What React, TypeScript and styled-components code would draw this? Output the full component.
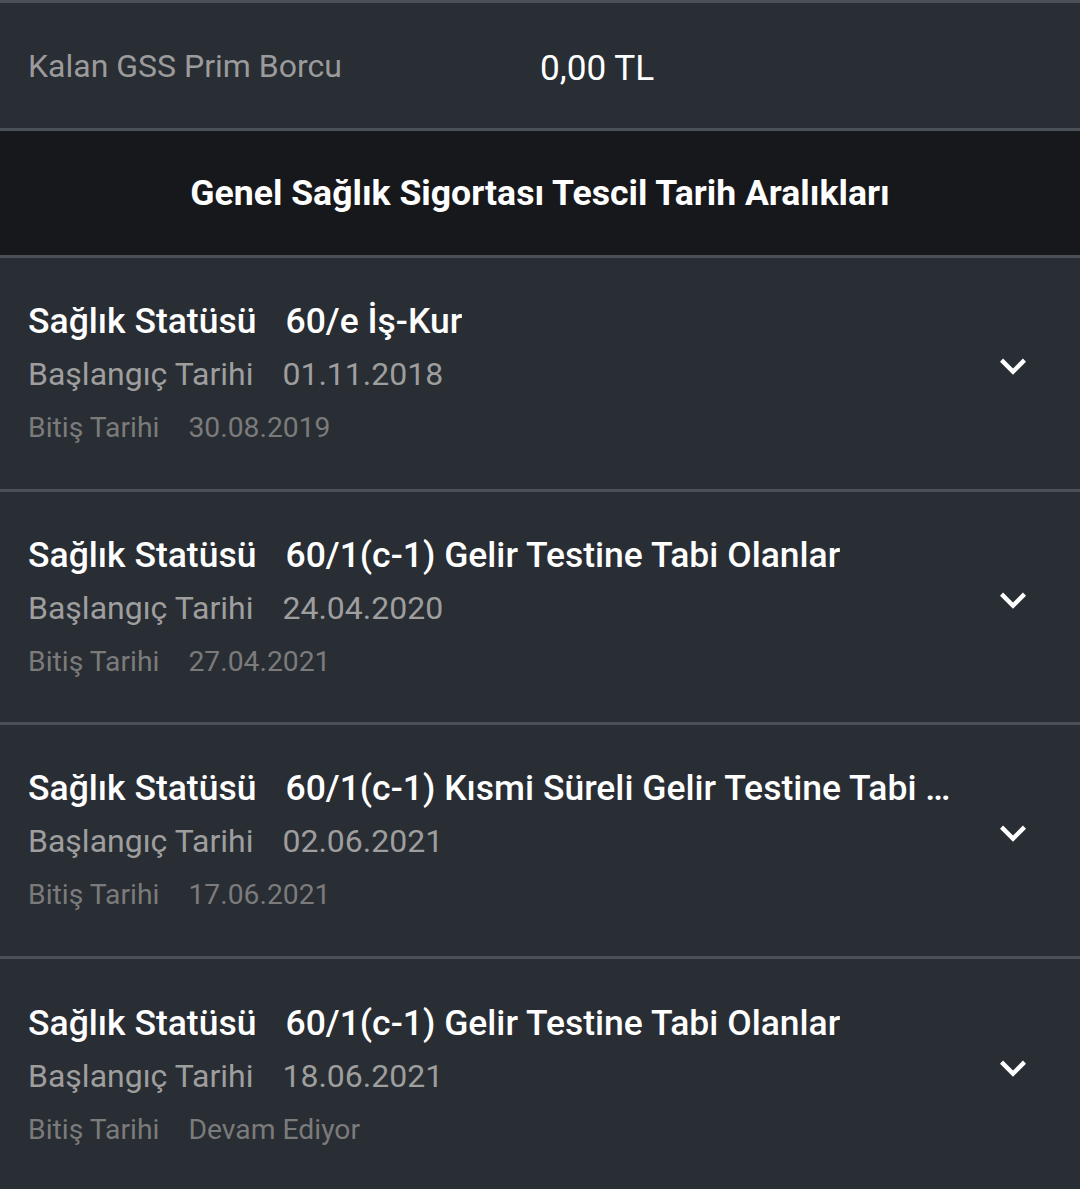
import React from 'react';
import styled, { createGlobalStyle } from 'styled-components';

const GlobalStyle = createGlobalStyle`
  html, body {
    margin: 0;
    padding: 0;
    background: #292d34;
    font-family: Roboto, "Noto Sans", "Liberation Sans", sans-serif;
  }
`;

const Page = styled.div`
  width: 1080px;
  background: #292d34;
  border-top: 3px solid #4b5058;
`;

const DebtRow = styled.div`
  display: grid;
  grid-template-columns: 1fr 1fr;
  align-items: center;
  height: 125px;
  padding-left: 28px;
  border-bottom: 3px solid #4b5058;
`;

const DebtLabel = styled.span`
  font-size: 32px;
  color: #9b9b9b;
`;

const DebtValue = styled.span`
  font-size: 35.2px;
  color: #ffffff;
  margin-left: -14px;
  padding-top: 4px;
`;

const SectionHeader = styled.div`
  display: flex;
  align-items: center;
  justify-content: center;
  height: 124px;
  background: #17181c;
  border-bottom: 3px solid #4b5058;
  color: #ffffff;
  font-size: 35.6px;
  font-weight: 700;
`;

const Item = styled.div`
  display: flex;
  align-items: center;
  height: 233.5px;
  box-sizing: border-box;
  padding: 0 41px 0 28px;
  border-bottom: 3px solid #4b5058;
  &:last-child {
    border-bottom: none;
  }
`;

const ItemText = styled.div`
  flex: 1;
  min-width: 0;
  display: flex;
  flex-direction: column;
  padding-right: 32px;
`;

const TitleLine = styled.div`
  display: flex;
  font-size: 35.5px;
  line-height: 40px;
  font-weight: 500;
  color: #ffffff;
  white-space: nowrap;
`;

const TitleLabel = styled.span`
  flex-shrink: 0;
  margin-right: 29px;
`;

const TitleValue = styled.span`
  overflow: hidden;
  text-overflow: ellipsis;
  min-width: 0;
`;

const InfoLine = styled.div<{ $size: number; $color: string; $gap: number }>`
  display: flex;
  gap: 29px;
  font-size: ${p => p.$size}px;
  line-height: ${p => Math.round(p.$size + 6)}px;
  color: ${p => p.$color};
  margin-top: ${p => p.$gap}px;
  white-space: nowrap;
`;

const Chevron = styled.svg`
  width: 52px;
  height: 52px;
  flex-shrink: 0;
  margin-bottom: 14px;
`;

type Period = { status: string; start: string; end: string };

const periods: Period[] = [
  { status: '60/e İş-Kur', start: '01.11.2018', end: '30.08.2019' },
  { status: '60/1(c-1) Gelir Testine Tabi Olanlar', start: '24.04.2020', end: '27.04.2021' },
  { status: '60/1(c-1) Kısmi Süreli Gelir Testine Tabi Olanlar', start: '02.06.2021', end: '17.06.2021' },
  { status: '60/1(c-1) Gelir Testine Tabi Olanlar', start: '18.06.2021', end: 'Devam Ediyor' },
];

const App: React.FC = () => {
  return (
    <Page>
      <GlobalStyle />
      <DebtRow>
        <DebtLabel>Kalan GSS Prim Borcu</DebtLabel>
        <DebtValue>0,00 TL</DebtValue>
      </DebtRow>
      <SectionHeader>Genel Sağlık Sigortası Tescil Tarih Aralıkları</SectionHeader>
      {periods.map((p, i) => (
        <Item key={i}>
          <ItemText>
            <TitleLine>
              <TitleLabel>Sağlık Statüsü</TitleLabel>
              <TitleValue>{p.status}</TitleValue>
            </TitleLine>
            <InfoLine $size={32} $color="#9e9e9e" $gap={14}>
              <span>Başlangıç Tarihi</span>
              <span>{p.start}</span>
            </InfoLine>
            <InfoLine $size={28.3} $color="#7b7b7b" $gap={18}>
              <span>Bitiş Tarihi</span>
              <span>{p.end}</span>
            </InfoLine>
          </ItemText>
          <Chevron viewBox="0 0 24 24">
            <path fill="#ffffff" d="M16.59 8.59L12 13.17 7.41 8.59 6 10l6 6 6-6z" />
          </Chevron>
        </Item>
      ))}
    </Page>
  );
};

export default App;
